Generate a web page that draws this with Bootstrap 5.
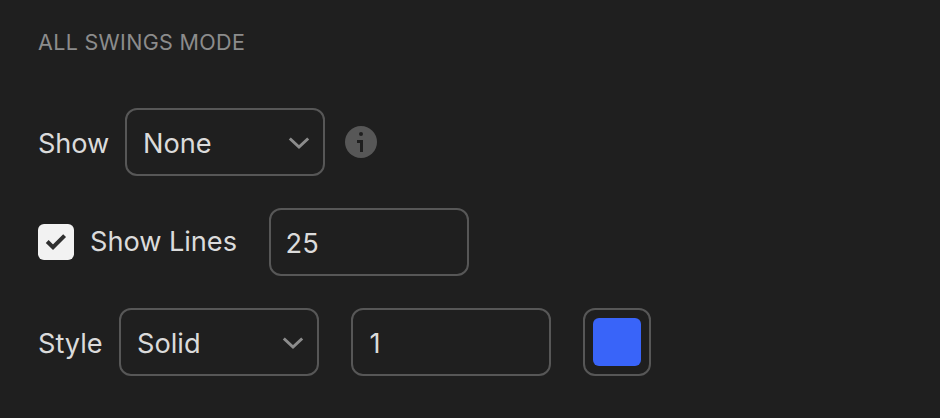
<!DOCTYPE html>
<html lang="en">
<head>
<meta charset="utf-8">
<meta name="viewport" content="width=device-width, initial-scale=1">
<title>All Swings Mode</title>
<link href="https://cdn.jsdelivr.net/npm/bootstrap@5.3.0/dist/css/bootstrap.min.css" rel="stylesheet">
<style>
body{background:#1f1f1f;color:#dbdbdb;font-family:Inter,"Liberation Sans",sans-serif;font-size:27.2px;line-height:34px;overflow:hidden}
.settings{padding:27px 38px 0}
.section-title{font-size:21.5px;line-height:30px;color:#8c8c8c;letter-spacing:.32px;font-weight:400;margin-bottom:51px}
.setting-row{height:68px;margin-bottom:32px}
.field,.field:focus{width:200px;height:68px;flex:none;border:2px solid #575757;border-radius:12px;background:#1f1f1f;color:#dbdbdb;font-size:27.2px;line-height:34px;padding:4px 16px 0;box-shadow:none}
.field.picker{padding-right:13px;letter-spacing:0}
input.field{padding-top:2px;padding-left:14.5px;letter-spacing:.2px}
input.field.gap-field{padding-left:16.5px}
.lbl-show{width:87px;padding-top:4px;letter-spacing:-.15px}
.lbl-style{width:81px;padding-top:4px}
.lbl-lines{width:179px;letter-spacing:-.05px}
.tick-box{width:36px;height:36px;border-radius:6px;background:#f2f2f2;margin-right:16px}
.swatch-frame{width:68px;height:68px;border:2px solid #575757;border-radius:12px}
.swatch{width:48px;height:48px;border-radius:6px;background:#3964f9}
.info{margin-left:20px}
.gap-field{margin-left:32px}
svg{display:block;flex:none}
</style>
<script src="https://cdn.jsdelivr.net/npm/bootstrap@5.3.0/dist/js/bootstrap.bundle.min.js"></script>
</head>
<body>
<main class="settings">
  <h2 class="section-title">ALL SWINGS MODE</h2>
  <div class="setting-row d-flex align-items-center">
    <span class="lbl-show">Show</span>
    <button type="button" class="btn field picker d-flex align-items-center justify-content-between">
      <span>None</span>
      <svg width="22" height="14" viewBox="0 0 22 14" fill="none" stroke="#8c8c8c" stroke-width="3"><path d="M1.800 1.500 11 10l9.200-8.500"/></svg>
    </button>
    <svg class="info" width="32" height="32" viewBox="0 0 32 32"><circle cx="16" cy="16" r="16" fill="#575757"/><circle cx="16" cy="8" r="2" fill="#1f1f1f"/><path d="M12 14h6v12h-3v-9h-3z" fill="#1f1f1f"/></svg>
  </div>
  <div class="setting-row d-flex align-items-center">
    <span class="tick-box d-flex align-items-center justify-content-center">
      <svg width="22" height="18" viewBox="0 0 22 18" fill="none" stroke="#303030" stroke-width="4"><path d="m2.200 8.500 5.800 5.600L19.600 2.600"/></svg>
    </span>
    <span class="lbl-lines">Show Lines</span>
    <input class="form-control field" type="text" value="25" aria-label="Lines">
  </div>
  <div class="setting-row d-flex align-items-center mb-0">
    <span class="lbl-style">Style</span>
    <button type="button" class="btn field picker d-flex align-items-center justify-content-between">
      <span>Solid</span>
      <svg width="22" height="14" viewBox="0 0 22 14" fill="none" stroke="#8c8c8c" stroke-width="3"><path d="M1.800 1.500 11 10l9.200-8.500"/></svg>
    </button>
    <input class="form-control field gap-field" type="text" value="1" aria-label="Line width">
    <span class="swatch-frame gap-field d-flex align-items-center justify-content-center"><span class="swatch"></span></span>
  </div>
</main>
</body>
</html>
